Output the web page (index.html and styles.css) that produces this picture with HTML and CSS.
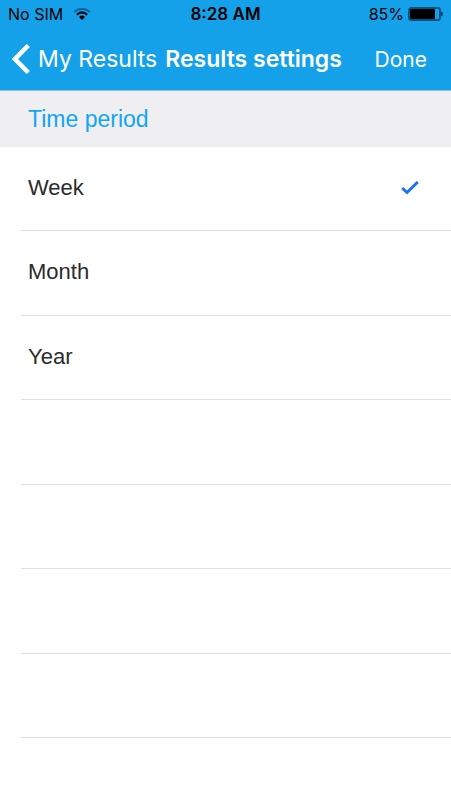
FILE: index.html
```
<!DOCTYPE html>
<html lang="en">
<head>
<meta charset="utf-8">
<meta name="viewport" content="width=device-width, initial-scale=1">
<title>Results settings</title>
<link rel="stylesheet" href="styles.css">
</head>
<body>
<header class="header">
  <div class="status">
    <div class="status-side">
      <span>No SIM</span>
      <svg class="wifi" viewBox="0 0 18 14" aria-hidden="true">
        <path d="M1 5C5.500 .9 12.500 .9 17 5" fill="none" stroke="#07659b" stroke-width="2"/>
        <path d="M3.800 7.700C7 4.900 11 4.900 14.200 7.700" fill="none" stroke="#000" stroke-width="2.100"/>
        <path d="M6 10Q9 7.200 12 10L9 13Z" fill="#000"/>
      </svg>
    </div>
    <time class="clock">8:28 AM</time>
    <div class="status-side status-right">
      <span>85%</span>
      <svg class="battery" viewBox="0 0 35 14" aria-hidden="true">
        <rect x="1" y="1" width="31" height="12" rx="2" fill="none" stroke="#07527e" stroke-width="1.800"/>
        <rect x="2" y="2" width="25" height="10" rx="1" fill="#000"/>
        <path d="M33 4.500Q35 5 35 7T33 9.500Z" fill="#063c5d"/>
      </svg>
    </div>
  </div>
  <nav class="nav">
    <a class="back" href="#results">
      <svg class="chevron" viewBox="0 0 18 30" aria-hidden="true"><path d="M16.300 1.500 3 15l13.300 13.500" fill="none" stroke="#fff" stroke-width="4.500"/></svg>
      <span>My Results</span>
    </a>
    <h1 class="title">Results settings</h1>
    <button class="done" type="button">Done</button>
  </nav>
</header>
<main>
  <h2 class="section" id="period">Time period</h2>
  <div class="list" role="radiogroup" aria-labelledby="period">
    <label class="row"><span>Week</span><input class="choice" type="radio" name="period" checked>
      <svg class="check" viewBox="0 0 18 14" aria-hidden="true"><path d="M1.200 7 6 11.500 16.800 1" fill="none" stroke="#1f71f5" stroke-width="3"/></svg></label>
    <label class="row"><span>Month</span><input class="choice" type="radio" name="period">
      <svg class="check" viewBox="0 0 18 14" aria-hidden="true"><path d="M1.200 7 6 11.500 16.800 1" fill="none" stroke="#1f71f5" stroke-width="3"/></svg></label>
    <label class="row"><span>Year</span><input class="choice" type="radio" name="period">
      <svg class="check" viewBox="0 0 18 14" aria-hidden="true"><path d="M1.200 7 6 11.500 16.800 1" fill="none" stroke="#1f71f5" stroke-width="3"/></svg></label>
    <div class="row"></div>
    <div class="row"></div>
    <div class="row"></div>
    <div class="row"></div>
  </div>
</main>
</body>
</html>
```
FILE: styles.css
```
* { box-sizing: border-box; }

body {
  margin: 0;
  background: #fff;
  color: #2b2b2b;
  font-family: "Liberation Sans", Arial, sans-serif;
}

.header {
  background: #14a1ea;
  border-bottom: 1px solid #8fbfda;
  font-family: Inter, "Liberation Sans", sans-serif;
}

.status {
  display: flex;
  align-items: center;
  height: 28px;
  padding: 0 8px;
  color: #000;
  font-size: 16px;
}

.status-side {
  display: flex;
  flex: 1;
  align-items: center;
  gap: 10px;
}

.status-right {
  justify-content: flex-end;
  gap: 4px;
}

.wifi { width: 18px; height: 14px; }
.battery { width: 35px; height: 14px; }

.clock {
  font-size: 17px;
  font-weight: 600;
}

.nav {
  display: flex;
  align-items: center;
  height: 62px;
  padding: 0 24px 0 12px;
  color: #fff;
  white-space: nowrap;
}

.back {
  display: flex;
  align-items: center;
  gap: 8px;
  color: inherit;
  font-size: 23px;
  text-decoration: none;
}

.chevron { width: 18px; height: 30px; }

.title {
  margin: 0 0 0 8px;
  font-size: 23px;
  font-weight: 600;
}

.done {
  margin-left: auto;
  padding: 0;
  border: 0;
  background: none;
  color: inherit;
  font: inherit;
  font-size: 21px;
}

.section {
  margin: 0;
  padding: 14px 28px;
  background: #efeff1;
  color: #12a5f4;
  font-size: 23px;
  font-weight: 400;
  line-height: 28px;
}

.list { padding-left: 21px; }

.row {
  display: flex;
  align-items: center;
  justify-content: space-between;
  min-height: 84px;
  padding: 0 32px 2px 7px;
  border-bottom: 1px solid #dedede;
  font-size: 22px;
}

.row:nth-child(even) { min-height: 85px; }

.choice {
  appearance: none;
  width: 0;
  height: 0;
  margin: 0;
}

.check {
  visibility: hidden;
  width: 18px;
  height: 14px;
}

.choice:checked + .check { visibility: visible; }
```
